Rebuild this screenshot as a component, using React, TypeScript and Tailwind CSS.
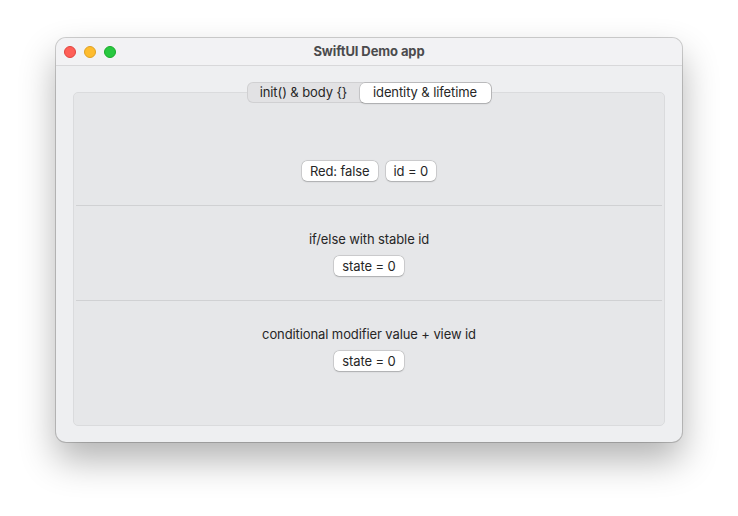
import React from 'react';

const PillButton: React.FC<{ label: string }> = ({ label }) => (
  <div className="h-[20px] px-[8px] flex items-center rounded-[5px] bg-white text-[13px] leading-none tracking-[-0.1px] text-[#262626] shadow-[0_0_0_0.5px_rgba(0,0,0,0.18),0_0.5px_1.5px_rgba(0,0,0,0.18)]">
    {label}
  </div>
);

const App: React.FC = () => {
  return (
    <div
      className="w-[738px] h-[516px] bg-white pt-[38px] pl-[56px]"
      style={{ fontFamily: 'Inter, "Noto Sans", sans-serif' }}
    >
      <div className="w-[626px] h-[404px] rounded-[10px] bg-[#eeeff1] flex flex-col overflow-hidden shadow-[0_0_0_1px_rgba(0,0,0,0.18),0_18px_36px_rgba(0,0,0,0.3)]">
        {/* Title bar */}
        <div className="relative h-[28px] shrink-0 bg-[#f2f2f4] border-b border-[#d8d8da] flex items-center justify-center">
          <div className="absolute left-[8px] top-[8px] flex gap-[8px]">
            <span className="w-[12px] h-[12px] rounded-full bg-[#fe5f57] border border-[#e0443e]" />
            <span className="w-[12px] h-[12px] rounded-full bg-[#febc2e] border border-[#dea123]" />
            <span className="w-[12px] h-[12px] rounded-full bg-[#28c840] border border-[#1aab29]" />
          </div>
          <span className="text-[13px] font-bold text-[#4b4b4d] tracking-[-0.1px]">SwiftUI Demo app</span>
        </div>

        {/* Content */}
        <div className="flex-1 flex flex-col items-center px-[16px] pt-[16px] pb-[16px] tracking-[-0.1px]">
          {/* Segmented control */}
          <div className="relative z-10 -mb-[11px] h-[21px] flex items-center rounded-[6px] bg-[#e2e2e4] shadow-[inset_0_0_0_1px_rgba(0,0,0,0.08)] p-[1px]">
            <div className="h-[19px] w-[112px] flex items-center justify-center text-[13px] text-[#262626]">
              init() &amp; body {'{}'}
            </div>
            <div className="h-[20px] w-[131px] flex items-center justify-center rounded-[5px] bg-white text-[13px] text-[#262626] shadow-[0_0_0_0.5px_rgba(0,0,0,0.2),0_1px_1.5px_rgba(0,0,0,0.18)]">
              identity &amp; lifetime
            </div>
          </div>

          {/* Panel */}
          <div className="w-[592px] flex-1 rounded-[5px] bg-[#e6e7e9] border border-[#dadbdd] flex flex-col px-[2px]">
            <div className="h-[113px] shrink-0 flex justify-center pt-[68px] gap-[8px] border-b border-[#d0d1d3]">
              <PillButton label="Red: false" />
              <PillButton label="id = 0" />
            </div>
            <div className="h-[95px] shrink-0 flex flex-col items-center pt-[25px] border-b border-[#d0d1d3]">
              <div className="h-[16px] leading-[16px] text-[13px] text-[#262626]">if/else with stable id</div>
              <div className="mt-[9px]">
                <PillButton label="state = 0" />
              </div>
            </div>
            <div className="flex-1 flex flex-col items-center pt-[25px]">
              <div className="h-[16px] leading-[16px] text-[13px] text-[#262626]">conditional modifier value + view id</div>
              <div className="mt-[9px]">
                <PillButton label="state = 0" />
              </div>
            </div>
          </div>
        </div>
      </div>
    </div>
  );
};

export default App;
